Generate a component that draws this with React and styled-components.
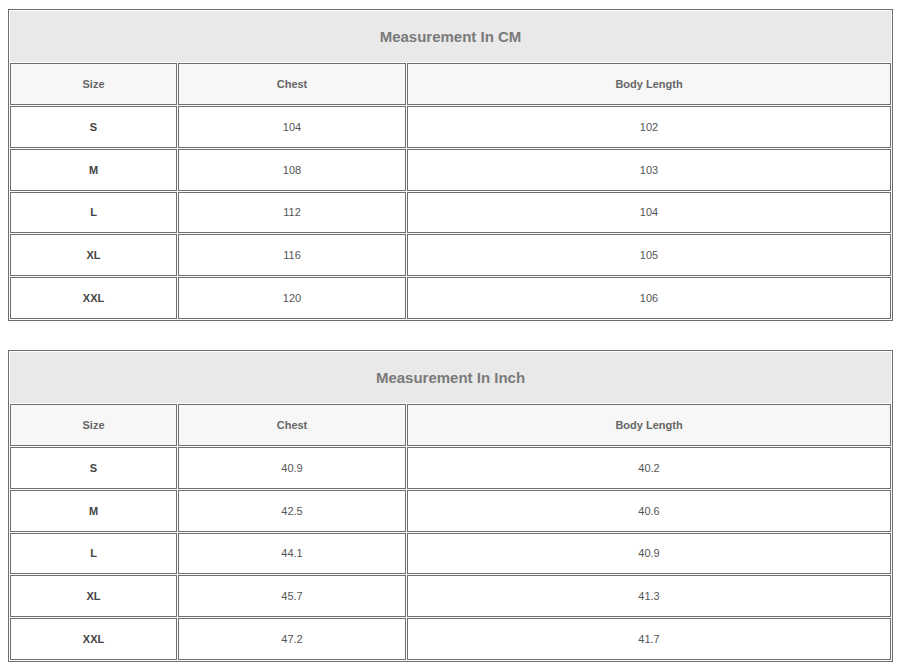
import styled, { createGlobalStyle } from "styled-components";

const tabelas = [
  {
    titulo: "Measurement In CM",
    linhas: [
      ["S", "104", "102"],
      ["M", "108", "103"],
      ["L", "112", "104"],
      ["XL", "116", "105"],
      ["XXL", "120", "106"],
    ],
  },
  {
    titulo: "Measurement In Inch",
    linhas: [
      ["S", "40.9", "40.2"],
      ["M", "42.5", "40.6"],
      ["L", "44.1", "40.9"],
      ["XL", "45.7", "41.3"],
      ["XXL", "47.2", "41.7"],
    ],
  },
];

export default function App() {
  return (
    <>
      <GlobalStyle />
      <Page>
        {tabelas.map((t) => (
          <SizeTable key={t.titulo}>
            <colgroup>
              <col width="167" />
              <col width="228" />
              <col width="484" />
            </colgroup>
            <tbody>
              <tr>
                <TitleCell colSpan={3}>{t.titulo}</TitleCell>
              </tr>
              <tr>
                <HeadCell>Size</HeadCell>
                <HeadCell>Chest</HeadCell>
                <HeadCell>Body Length</HeadCell>
              </tr>
              {t.linhas.map((l) => (
                <tr key={l[0]}>
                  <Cell $bold>{l[0]}</Cell>
                  <Cell>{l[1]}</Cell>
                  <Cell>{l[2]}</Cell>
                </tr>
              ))}
            </tbody>
          </SizeTable>
        ))}
      </Page>
    </>
  );
}

const GlobalStyle = createGlobalStyle`
  body {
    margin: 0;
    background: #ffffff;
    font-family: "Liberation Sans", Arial, sans-serif;
  }
`;

const Page = styled.div`
  display: flex;
  flex-direction: column;
  gap: 29px;
  padding: 9px 8px 8px;
`;

const SizeTable = styled.table`
  width: 885px;
  table-layout: fixed;
  border-collapse: separate;
  border-spacing: 1px;
  border: 1px solid #6e6e6e;
`;

const TitleCell = styled.td`
  box-sizing: border-box;
  height: 51px;
  padding: 0;
  background: #e9e9e9;
  border: 1px solid #e9e9e9;
  text-align: center;
  font-size: 15px;
  font-weight: 700;
  color: #7a7a7a;
`;

const HeadCell = styled.td`
  box-sizing: border-box;
  height: 42px;
  padding: 0;
  background: #f7f7f7;
  border: 1px solid #6e6e6e;
  text-align: center;
  font-size: 11px;
  font-weight: 700;
  color: #666666;
`;

const Cell = styled.td`
  box-sizing: border-box;
  height: 41.8px;
  padding: 0;
  background: #ffffff;
  border: 1px solid #6e6e6e;
  text-align: center;
  font-size: 11px;
  font-weight: ${(p) => (p.$bold ? 700 : 400)};
  color: ${(p) => (p.$bold ? "#444444" : "#555555")};
`;
